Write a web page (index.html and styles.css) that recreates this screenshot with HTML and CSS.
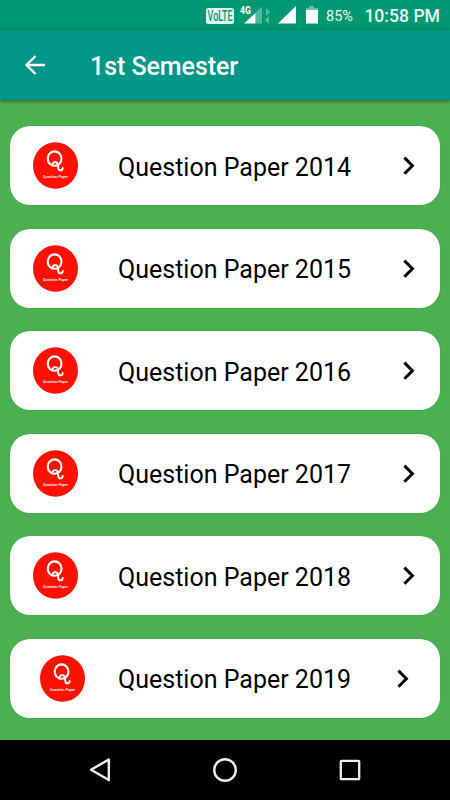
FILE: index.html
```html
<!DOCTYPE html>
<html lang="en">
<head>
<meta charset="utf-8">
<title>1st Semester</title>
<link rel="stylesheet" href="styles.css">
</head>
<body>
<div class="screen">
  <div class="status">
    <svg class="status-icons" width="120" height="30" viewBox="0 0 120 30">
      <rect x="1" y="8" width="28" height="16" rx="2.5" fill="#e5f5f0"/>
      <text x="2.6" y="21" textLength="25" lengthAdjust="spacingAndGlyphs" class="volte">VoLTE</text>
      <text x="35" y="13.500" textLength="11" lengthAdjust="spacingAndGlyphs" class="net">4G</text>
      <path d="M50.500 12.500L57 6.500V23.500H50.500Z" fill="#4fb89e"/>
      <path d="M39 23.500L50.500 13V23.500Z" fill="#fff"/>
      <path d="M61 8L65.500 12L61 16Z M64 16L59.500 20L64 24Z" fill="#4fb89e"/>
      <path d="M73 23.500L91 6V23.500Z" fill="#fff"/>
      <path d="M104 6H109V8H113V11H101V8H104Z" fill="#66c0a9"/>
      <rect x="101" y="10" width="12" height="13.500" fill="#fff"/>
    </svg>
    <span class="battery">85%</span>
    <span class="clock">10:58 PM</span>
  </div>
  <header class="appbar">
    <svg width="22" height="22" viewBox="0 0 22 22"><path d="M21 11H3M11.500 2L2.500 11L11.500 20" fill="none" stroke="#fff" stroke-width="2.300"/></svg>
    <h1>1st Semester</h1>
  </header>
  <main class="list">
    <div class="card">
      <svg class="logo" viewBox="0 0 45 47">
        <defs>
          <g id="logo">
            <ellipse cx="22.500" cy="23.500" rx="22.500" ry="23.200" fill="#fe1100"/>
            <g fill="none" stroke="#fff" stroke-linecap="round">
              <ellipse cx="21.600" cy="16.600" rx="6.900" ry="7.200" stroke-width="2.100"/>
              <path d="M19.600 23.600C18.800 19.600 24.200 18.800 24.900 22.600C25.500 25.600 24.600 28.400 27.200 28.400C28.900 28.400 29.700 27.600 29.700 26" stroke-width="1.900"/>
            </g>
          </g>
          <path id="chevron" d="M1.400 1.600L9.400 9.700L1.400 17.800" fill="none" stroke="#000" stroke-width="3"/>
        </defs>
        <use href="#logo"/><text x="10" y="36.200" textLength="25" class="logo-text">Question Paper</text>
      </svg>
      <span>Question Paper 2014</span><svg class="chevron"><use href="#chevron"/></svg>
    </div>
    <div class="card"><svg class="logo" viewBox="0 0 45 47"><use href="#logo"/><text x="10" y="36.200" textLength="25" class="logo-text">Question Paper</text></svg><span>Question Paper 2015</span><svg class="chevron"><use href="#chevron"/></svg></div>
    <div class="card"><svg class="logo" viewBox="0 0 45 47"><use href="#logo"/><text x="10" y="36.200" textLength="25" class="logo-text">Question Paper</text></svg><span>Question Paper 2016</span><svg class="chevron"><use href="#chevron"/></svg></div>
    <div class="card"><svg class="logo" viewBox="0 0 45 47"><use href="#logo"/><text x="10" y="36.200" textLength="25" class="logo-text">Question Paper</text></svg><span>Question Paper 2017</span><svg class="chevron"><use href="#chevron"/></svg></div>
    <div class="card"><svg class="logo" viewBox="0 0 45 47"><use href="#logo"/><text x="10" y="36.200" textLength="25" class="logo-text">Question Paper</text></svg><span>Question Paper 2018</span><svg class="chevron"><use href="#chevron"/></svg></div>
    <div class="card inset"><svg class="logo" viewBox="0 0 45 47"><use href="#logo"/><text x="10" y="36.200" textLength="25" class="logo-text">Question Paper</text></svg><span>Question Paper 2019</span><svg class="chevron"><use href="#chevron"/></svg></div>
  </main>
  <nav class="navbar">
    <svg width="24" height="26" viewBox="0 0 24 26"><path d="M20.800 2.500V23L3 12.800Z" fill="none" stroke="#eee" stroke-width="2.400" stroke-linejoin="round"/></svg>
    <svg width="24" height="26" viewBox="0 0 24 26"><circle cx="12" cy="13" r="10.800" fill="none" stroke="#eee" stroke-width="2.400"/></svg>
    <svg width="24" height="26" viewBox="0 0 24 26"><rect x="2.800" y="3.800" width="18.400" height="18.400" rx="0.500" fill="none" stroke="#eee" stroke-width="2.300"/></svg>
  </nav>
</div>
</body>
</html>
```
FILE: styles.css
```css
* { box-sizing: border-box; }
body { margin: 0; font-family: Roboto, sans-serif; }
.screen { width: 450px; height: 800px; display: flex; flex-direction: column; background: #4caf50; overflow: hidden; }
.status { height: 30px; background: #009874; color: #e8f6f2; display: flex; align-items: center; padding: 2px 10px 0 205px; }
.status-icons { margin-top: -2px; flex: none; }
.volte { font: 500 14px Roboto, sans-serif; fill: #009874; }
.net { font: 700 10px Roboto, sans-serif; fill: #fff; }
.battery { font-size: 14.5px; width: 39.500px; padding-left: 1px; }
.clock { font-size: 17.600px; font-weight: 500; white-space: nowrap; }
.appbar { height: 70px; flex: none; background: #009688; color: #fff; display: flex; align-items: center; padding-left: 24px; box-shadow: 0 1px 4px rgba(60, 50, 0, .75); z-index: 1; }
.appbar h1 { margin: 4px 0 0 44px; font-size: 25px; font-weight: 500; line-height: 30px; letter-spacing: -.05px; }
.list { height: 640px; flex: none; padding: 26px 10px 0; display: flex; flex-direction: column; gap: 23.500px; }
.card { height: 79px; flex: none; background: #fff; border-radius: 20px; display: flex; align-items: center; padding: 0 24px 0 23px; box-shadow: 0 0 1px #00a51b; }
.card span { font-size: 25px; line-height: 32px; margin: 4.500px 0 0 40px; flex: 1; white-space: nowrap; color: #000; }
.card.inset { padding: 0 30px 0 29.500px; }
.card.inset span { margin-left: 33.500px; }
.logo { width: 45px; height: 47px; flex: none; }
.logo-text { font: 500 3.700px Roboto, sans-serif; fill: #fff; }
.chevron { width: 12px; height: 20px; flex: none; margin: 1px 1px 0 -1px; }
.navbar { height: 60px; flex: none; background: #000; display: flex; align-items: center; justify-content: space-between; padding: 0 88px; }
```
